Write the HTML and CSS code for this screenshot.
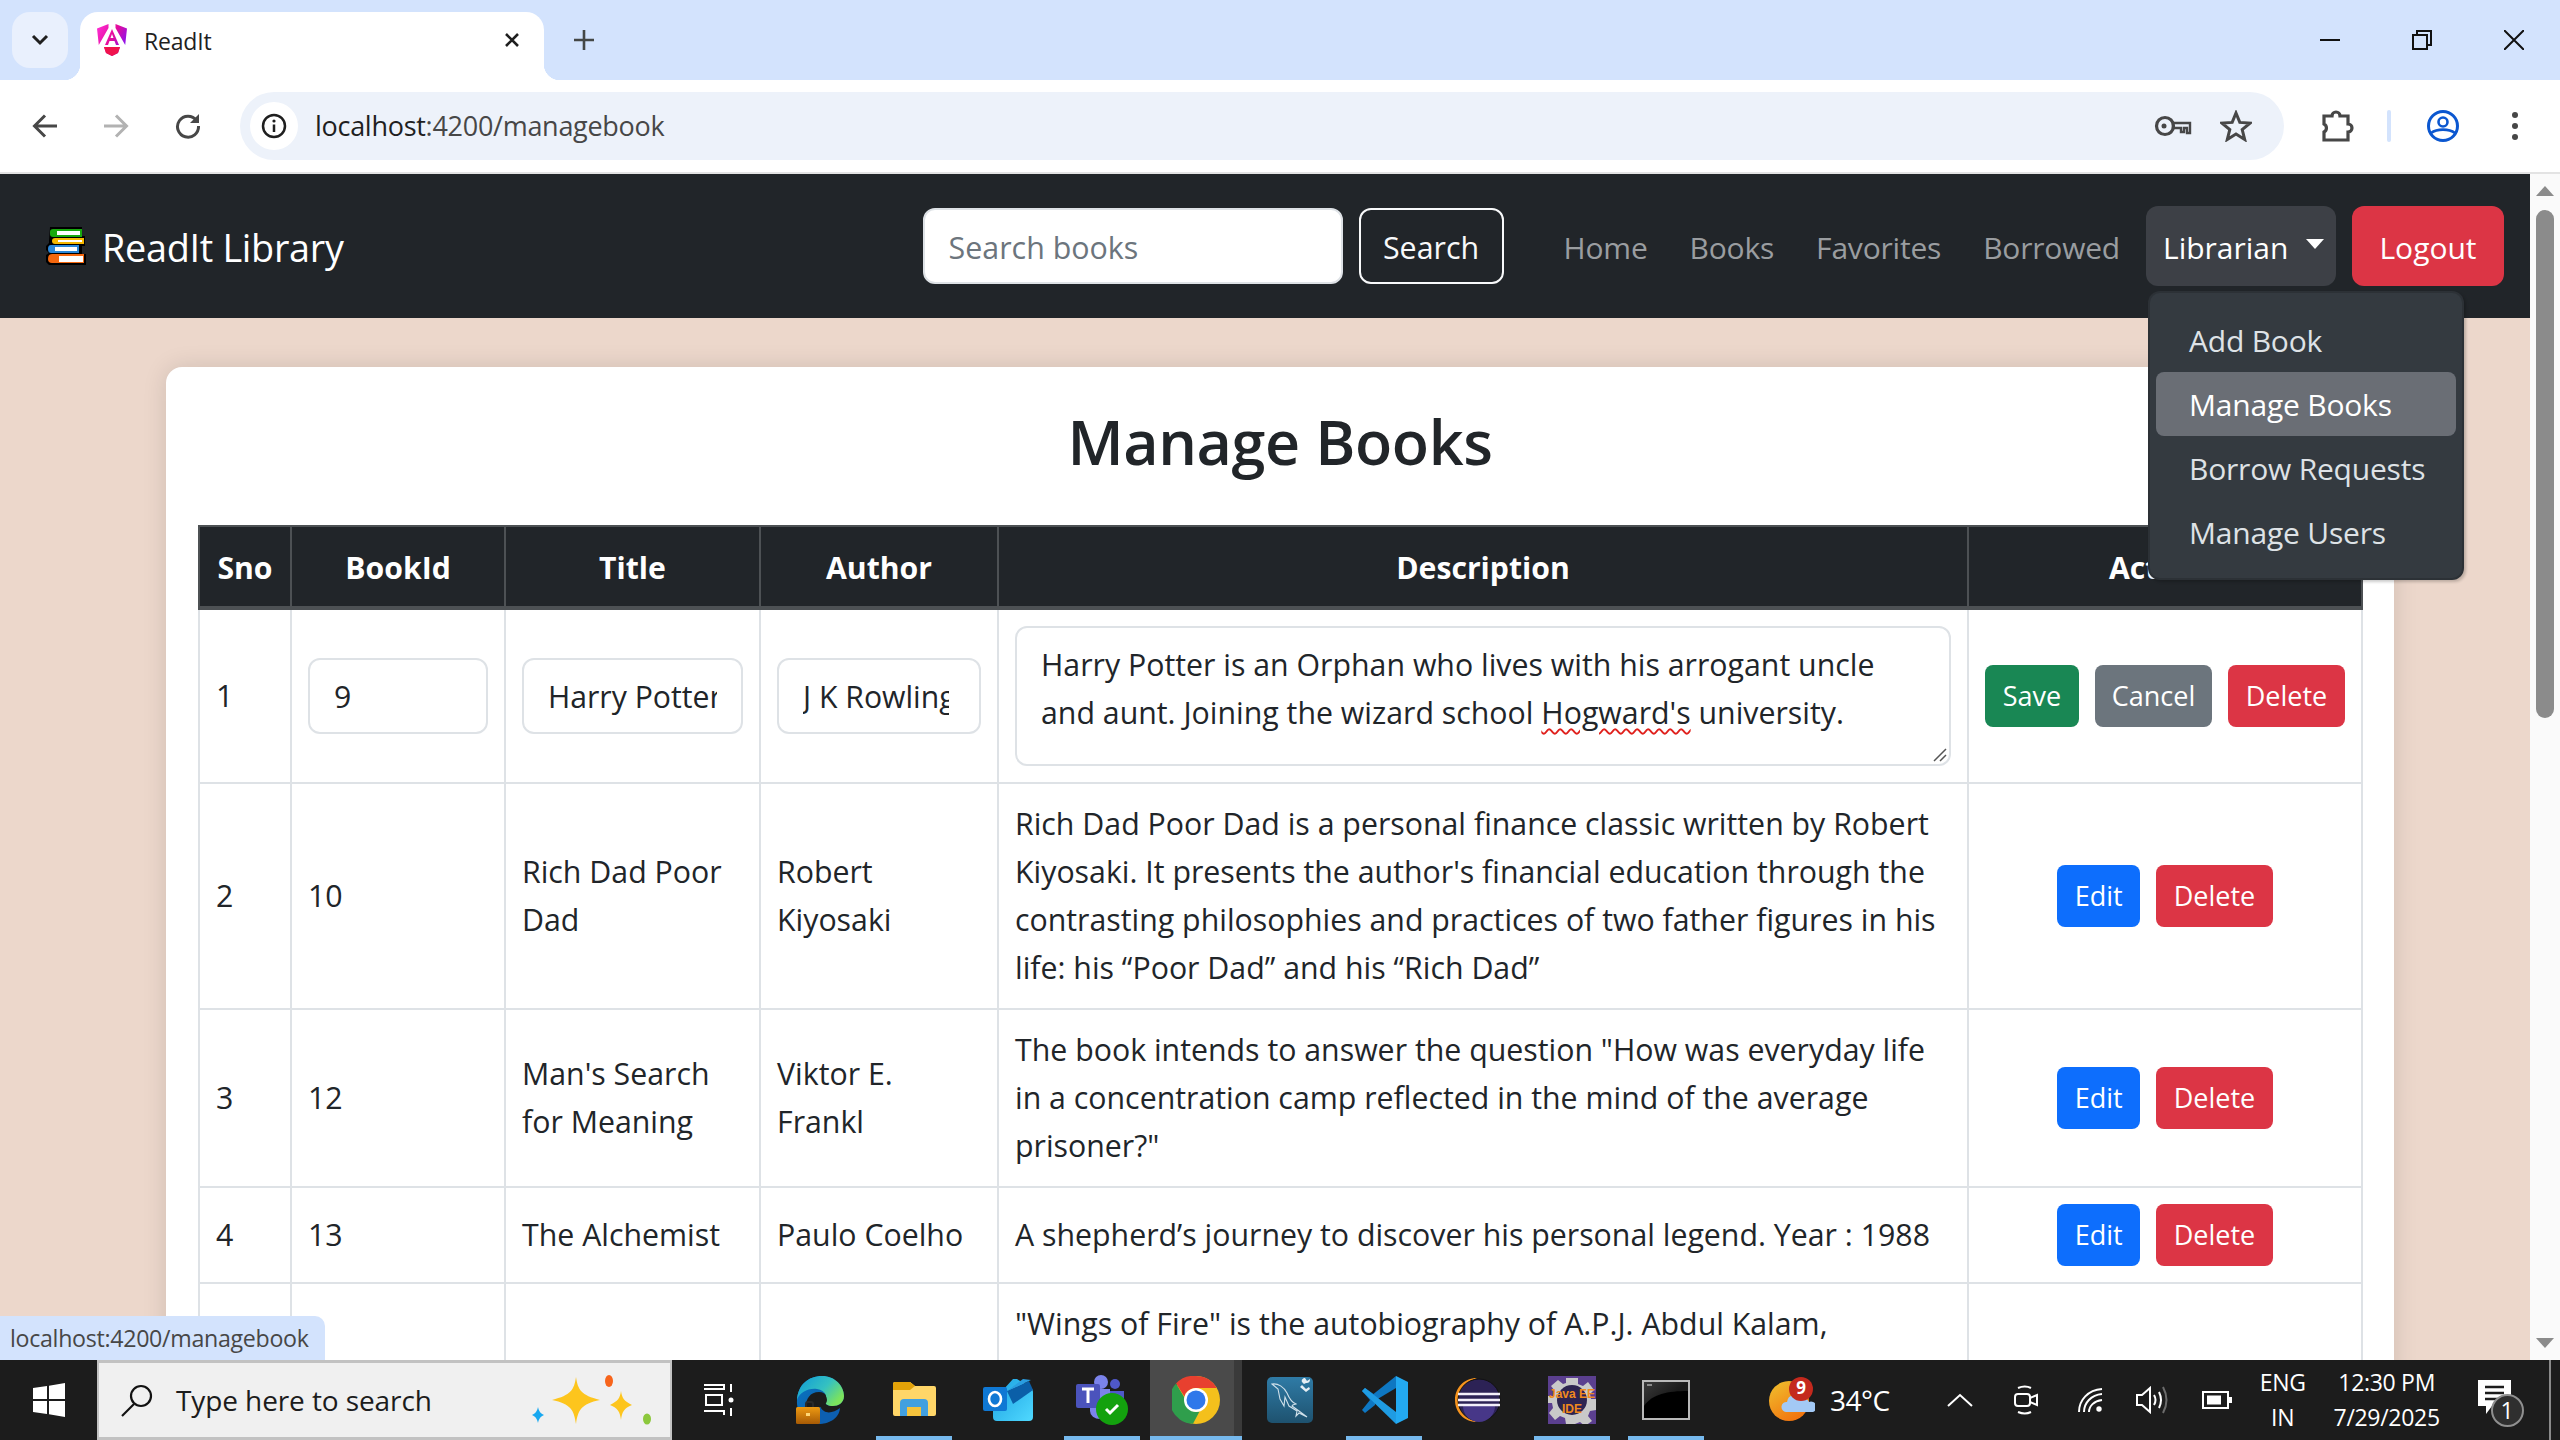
FILE: index.html
```html
<!DOCTYPE html>
<html lang="en">
<head>
<meta charset="utf-8">
<title>ReadIt</title>
<link rel="stylesheet" href="styles.css">
</head>
<body>
<div class="screen">
  <header class="tabstrip">
    <div class="tab-search">
      <svg class="ic" width="20" height="14" viewBox="0 0 20 14"><path d="M3 3l7 7 7-7" fill="none" stroke="#1f1f1f" stroke-width="3"/></svg>
    </div>
    <div class="tab">
      <svg class="favicon" width="30" height="32" viewBox="0 0 30 32">
        <defs><linearGradient id="ang" x1="0" y1="0" x2="1" y2="0.6"><stop offset="0" stop-color="#ff31d9"/><stop offset="0.55" stop-color="#e40c9a"/><stop offset="1" stop-color="#8514f5"/></linearGradient></defs>
        <path d="M11.5 0L0 4.5 1.8 21 11.5 4zM18.5 0L30 4.5 28.2 21 18.5 4zM15 5L8 21h3l1.5-4h5l1.5 4h3zM13.5 14L15 10l1.500 4zM7 23h16l-2 6-6 3-6-3z" fill="url(#ang)"/>
        <path d="M7 23h16l-2 6-6 3-6-3z" fill="#f0134d"/>
      </svg>
      <span class="tab-title">ReadIt</span>
      <svg class="tab-close" width="16" height="16" viewBox="0 0 16 16"><path d="M2 2l12 12M14 2L2 14" stroke="#1f1f1f" stroke-width="2.600"/></svg>
    </div>
    <svg class="new-tab" width="22" height="22" viewBox="0 0 22 22"><path d="M11 1v20M1 11h20" stroke="#444746" stroke-width="2.600"/></svg>
    <div class="window-controls">
      <svg width="20" height="20" viewBox="0 0 20 20"><path d="M0 10h20" stroke="#111" stroke-width="2"/></svg>
      <svg width="20" height="20" viewBox="0 0 20 20"><path d="M1 5h14v14H1zM5 5V1h14v14h-4" fill="none" stroke="#111" stroke-width="2"/></svg>
      <svg width="20" height="20" viewBox="0 0 20 20"><path d="M0 0l20 20M20 0L0 20" stroke="#111" stroke-width="2"/></svg>
    </div>
  </header>

  <div class="toolbar">
    <svg class="tb-back" width="26" height="24" viewBox="0 0 26 24"><path d="M25 12H3M13 1.500L2.500 12 13 22.500" fill="none" stroke="#474747" stroke-width="3"/></svg>
    <svg class="tb-forward" width="26" height="24" viewBox="0 0 26 24"><path d="M1 12h22M13 1.500L23.500 12 13 22.500" fill="none" stroke="#b2b2b2" stroke-width="3"/></svg>
    <svg class="tb-reload" width="26" height="26" viewBox="0 0 26 26"><path d="M21.500 7.500A10.500 10.500 0 1 0 23.500 13" fill="none" stroke="#474747" stroke-width="3"/><path d="M24 1v9h-9" fill="#474747"/></svg>
    <div class="omnibox">
      <span class="site-info"><svg width="26" height="26" viewBox="0 0 26 26"><circle cx="13" cy="13" r="11" fill="none" stroke="#1f1f1f" stroke-width="2.500"/><path d="M13 11.500V19" stroke="#1f1f1f" stroke-width="2.500"/><circle cx="13" cy="8" r="1.600" fill="#1f1f1f"/></svg></span>
      <span class="url"><span class="url-host">localhost</span>:4200/managebook</span>
      <svg class="omni-key" width="38" height="24" viewBox="0 0 38 24"><circle cx="11" cy="12" r="8.500" fill="none" stroke="#474747" stroke-width="3.200"/><circle cx="10" cy="12" r="2.500" fill="#474747"/><path d="M19 9h17v10h-3v-5h-3v4h-3v-4h-8z" fill="none" stroke="#474747" stroke-width="2.400"/></svg>
      <svg class="omni-star" width="32" height="32" viewBox="0 0 32 32"><path d="M16 3l3.800 9.400 10.200.7-7.800 6.500 2.500 9.900L16 24.100 7.300 29.500l2.500-9.900L2 13.100l10.200-.7z" fill="none" stroke="#474747" stroke-width="3"/></svg>
    </div>
    <svg class="tb-ext" width="34" height="34" viewBox="0 0 34 34"><path d="M4 7h8a4 4 0 0 1 8 0h8v8a4 4 0 0 1 0 8v8H4v-8a4.500 4.500 0 0 0 0-8z" fill="none" stroke="#474747" stroke-width="3.200"/></svg>
    <span class="tb-sep"></span>
    <svg class="tb-profile" width="32" height="32" viewBox="0 0 32 32"><circle cx="16" cy="16" r="14.500" fill="none" stroke="#0b57d0" stroke-width="3"/><circle cx="16" cy="12" r="4.500" fill="none" stroke="#0b57d0" stroke-width="2.600"/><path d="M4 23c6-4.500 18-4.500 24 0" fill="none" stroke="#0b57d0" stroke-width="2.600"/></svg>
    <svg class="tb-menu" width="8" height="30" viewBox="0 0 8 30"><circle cx="4" cy="4" r="3" fill="#474747"/><circle cx="4" cy="15" r="3" fill="#474747"/><circle cx="4" cy="26" r="3" fill="#474747"/></svg>
  </div>

  <div class="viewport">
    <div class="page">
      <nav class="navbar">
        <a class="brand">
          <svg width="42" height="40" viewBox="0 0 42 40">
            <path d="M5 1h32v9h3v10h-3v8h4v11H4l-3-3v-7l3-2-3-3v-4l3-3-0-2z" fill="#000"/>
            <path d="M5 6q0-3 3-3h29v8H8q-3 0-3-3z" fill="#18a80e"/><path d="M12 5h23v4H12z" fill="#fff"/>
            <path d="M7 15q0-3 3-3h29v6H10q-3 0-3-3z" fill="#f6b700"/><path d="M13 14h24v2H13z" fill="#fff"/>
            <path d="M3 23q0-4 3-4h28v8H6q-3 0-3-4z" fill="#2b87d8"/><path d="M10 21h22v4H10z" fill="#fff"/>
            <path d="M3 33q0-5 4-5h32v9H7q-4 0-4-4z" fill="#f4670e"/><path d="M14 30h24v6H14z" fill="#fff"/>
          </svg>
          <span class="brand-name">ReadIt Library</span>
        </a>
        <form class="search">
          <input class="search-input" type="text" placeholder="Search books">
          <button class="search-btn" type="button">Search</button>
        </form>
        <div class="nav-links">
          <a class="nav-link">Home</a>
          <a class="nav-link">Books</a>
          <a class="nav-link">Favorites</a>
          <a class="nav-link">Borrowed</a>
        </div>
        <div class="dropdown">
          <button class="dropdown-toggle" type="button">Librarian<span class="caret"></span></button>
          <ul class="dropdown-menu">
            <li class="dropdown-item">Add Book</li>
            <li class="dropdown-item active">Manage Books</li>
            <li class="dropdown-item">Borrow Requests</li>
            <li class="dropdown-item">Manage Users</li>
          </ul>
        </div>
        <button class="logout" type="button">Logout</button>
      </nav>

      <main class="content">
        <section class="card">
          <h2 class="card-title">Manage Books</h2>
          <table class="books">
            <colgroup><col class="c-sno"><col class="c-id"><col class="c-title"><col class="c-author"><col class="c-desc"><col class="c-act"></colgroup>
            <thead>
              <tr><th>Sno</th><th>BookId</th><th>Title</th><th>Author</th><th>Description</th><th>Actions</th></tr>
            </thead>
            <tbody>
              <tr>
                <td>1</td>
                <td><input class="field" type="text" value="9"></td>
                <td><input class="field" type="text" value="Harry Potter"></td>
                <td><input class="field field-clip" type="text" value="J K Rowling"></td>
                <td>
                  <div class="field-area">Harry Potter is an Orphan who lives with his arrogant uncle and aunt. Joining the wizard school <span class="misspelt">Hogward's</span> university.
                    <svg class="grip" width="14" height="14" viewBox="0 0 14 14"><path d="M13 1L1 13M13 7l-6 6" stroke="#555" stroke-width="1.500"/></svg>
                  </div>
                </td>
                <td class="actions"><button class="btn save" type="button">Save</button><button class="btn cancel" type="button">Cancel</button><button class="btn del" type="button">Delete</button></td>
              </tr>
              <tr>
                <td>2</td><td>10</td><td>Rich Dad Poor Dad</td><td>Robert Kiyosaki</td>
                <td>Rich Dad Poor Dad is a personal finance classic written by Robert Kiyosaki. It presents the author's financial education through the contrasting philosophies and practices of two father figures in his life: his “Poor Dad” and his “Rich Dad”</td>
                <td class="actions"><button class="btn edit" type="button">Edit</button><button class="btn del" type="button">Delete</button></td>
              </tr>
              <tr>
                <td>3</td><td>12</td><td>Man's Search for Meaning</td><td>Viktor E. Frankl</td>
                <td>The book intends to answer the question "How was everyday life<br>in a concentration camp reflected in the mind of the average prisoner?"</td>
                <td class="actions"><button class="btn edit" type="button">Edit</button><button class="btn del" type="button">Delete</button></td>
              </tr>
              <tr>
                <td>4</td><td>13</td><td>The Alchemist</td><td>Paulo Coelho</td>
                <td>A shepherd’s journey to discover his personal legend. Year : 1988</td>
                <td class="actions"><button class="btn edit" type="button">Edit</button><button class="btn del" type="button">Delete</button></td>
              </tr>
              <tr class="row-clipped">
                <td></td><td></td><td></td><td></td>
                <td class="cell-top">"Wings of Fire" is the autobiography of A.P.J. Abdul Kalam,</td>
                <td></td>
              </tr>
            </tbody>
          </table>
        </section>
      </main>
    </div>
    <aside class="scrollbar">
      <span class="sb-up"></span>
      <span class="sb-thumb"></span>
      <span class="sb-down"></span>
    </aside>
    <div class="status">localhost:4200/managebook</div>
  </div>

  <footer class="taskbar">
    <div class="start">
      <svg width="32" height="34" viewBox="0 0 32 34"><path d="M0 5l14-2v13H0zM16 2.700L32 0v16H16zM0 18h14v13L0 29zM16 18h16v16l-16-2.700z" fill="#fff"/></svg>
    </div>
    <div class="searchbox">
      <svg class="mag" width="34" height="34" viewBox="0 0 34 34"><circle cx="21" cy="13" r="10" fill="none" stroke="#111" stroke-width="2.200"/><path d="M14 21L2 33" stroke="#111" stroke-width="2.200"/></svg>
      <span class="searchbox-text">Type here to search</span>
      <svg class="sparkles" width="122" height="50" viewBox="0 0 122 50">
        <path d="M47 2c2 13 5 18 24 23-19 4-22 10-24 24-2-14-5-20-24-24 19-5 22-10 24-23z" fill="#fdc51d"/>
        <path d="M92 16c1 7 3 10 11 14-8 3-10 7-11 15-1-8-3-12-11-15 8-4 10-7 11-14z" fill="#fdc51d"/>
        <path d="M9 32c1 4 2 6 6 8-4 2-5 4-6 8-1-4-2-6-6-8 4-2 5-4 6-8z" fill="#18a8f0"/>
        <ellipse cx="80" cy="6" rx="4" ry="6" fill="#f7641b"/>
        <ellipse cx="118" cy="44" rx="4" ry="5.500" fill="#8cc83c"/>
      </svg>
    </div>
    <div class="slot slot-view">
      <svg width="32" height="32" viewBox="0 0 32 32" fill="none" stroke="#fff" stroke-width="2"><path d="M0 1h20v4H0M2 11h16v10H2zM0 27h20v4M0 31M27 0v8M27 24v8"/><circle cx="27" cy="16" r="2.500" fill="#fff" stroke="none"/></svg>
    </div>
    <div class="slot">
      <svg width="48" height="48" viewBox="0 0 48 48">
        <defs>
          <linearGradient id="edge1" x1="0" y1="0" x2="1" y2="0.6"><stop offset="0" stop-color="#0e9ad8"/><stop offset="0.6" stop-color="#35c1c1"/><stop offset="1" stop-color="#7ce35c"/></linearGradient>
          <linearGradient id="edge2" x1="0" y1="0" x2="1" y2="1"><stop offset="0" stop-color="#0a78c8"/><stop offset="1" stop-color="#0c4f96"/></linearGradient>
          <linearGradient id="brief" x1="0" y1="0" x2="0" y2="1"><stop offset="0" stop-color="#ee9a12"/><stop offset="1" stop-color="#a65a05"/></linearGradient>
        </defs>
        <path d="M24 48C10 48 0 38 1 24 2 9 12 0 26 0c13 0 22 10 22 20 0 7-6 10-11 10-6 0-8-2-8-5 4-2 2-9-6-9-9 0-13 7-13 14 0 9 7 18 18 18z" fill="url(#edge2)"/>
        <path d="M1 24C2 9 12 0 26 0c13 0 22 10 22 20 0 7-6 10-11 10-5 0-8-2-8-5 3-3 1-11-8-12C12 12 4 16 1 24z" fill="url(#edge1)"/>
        <path d="M23 48c8 0 20-4 21-16-5 4-12 6-16 3-3-2-4-4-2-4-5 0-10 4-8 10 1 4 3 6 5 7z" fill="#0d5fb0"/>
        <circle cx="25" cy="24" r="6" fill="#1c1c1c"/>
        <path d="M10 31v-3q0-2 2-2h3q2 0 2 2v3" fill="none" stroke="#2a2a2a" stroke-width="2"/>
        <rect x="0" y="31" width="24" height="17" rx="1.500" fill="url(#brief)"/>
        <rect x="10" y="37" width="4" height="3" fill="#ffd776"/>
      </svg>
    </div>
    <div class="slot running">
      <svg width="44" height="36" viewBox="0 0 44 36">
        <path d="M1 2q0-2 2-2h15l5 4h19q2 0 2 2v26q0 2-2 2H3q-2 0-2-2z" fill="#ffd668"/>
        <path d="M1 2q0-2 2-2h15l5 4-5 4H1z" fill="#e3a208"/>
        <path d="M8 34V21q0-4 4-4h20q4 0 4 4v13h-7v-9H15v9z" fill="#42a0e0"/>
        <path d="M15 25h14v9H15z" fill="#f5c33c"/>
      </svg>
    </div>
    <div class="slot">
      <svg width="50" height="42" viewBox="0 0 50 42">
        <defs><linearGradient id="ol" x1="0" y1="0" x2="1" y2="1"><stop offset="0" stop-color="#1a9fe0"/><stop offset="1" stop-color="#50d9ff"/></linearGradient></defs>
        <path d="M10 22L30 0q2-1 4 0l14 9q2 1 2 4v25q0 4-4 4H14q-4 0-4-4z" fill="url(#ol)"/>
        <path d="M24 12l22-10 4 9-20 14z" fill="#0b5fa8"/><path d="M24 12l24-11-8-1z" fill="#2a9de0"/>
        <rect x="0" y="8" width="24" height="24" rx="2" fill="#0f78d4"/>
        <ellipse cx="12" cy="20" rx="6" ry="7" fill="none" stroke="#fff" stroke-width="2.600"/>
      </svg>
    </div>
    <div class="slot running">
      <svg width="52" height="50" viewBox="0 0 52 50">
        <circle cx="25" cy="7" r="7" fill="#7b83eb"/><circle cx="39" cy="9" r="5" fill="#4f58ca"/>
        <path d="M20 16h28v22H20z" fill="#4f58ca"/><path d="M14 14h20v22a10 8 0 0 1-20 0z" fill="#7b83eb"/>
        <rect x="0" y="9" width="24" height="24" rx="2" fill="#4b53bc"/>
        <path d="M6 14h12M12 14v14" stroke="#fff" stroke-width="3"/>
        <circle cx="36" cy="34" r="16" fill="#13a10e"/>
        <path d="M30 34l4 4 8-8" fill="none" stroke="#fff" stroke-width="3"/>
      </svg>
    </div>
    <div class="slot active running">
      <svg width="48" height="48" viewBox="0 0 48 48">
        <circle cx="24" cy="24" r="24" fill="#f4c01c"/>
        <path d="M24 0a24 24 0 0 1 20.800 12H24a12 12 0 0 0-11.500 8.500L4 7.500A24 24 0 0 1 24 0z" fill="#e8402f"/>
        <path d="M4 7.500l9 15a12 12 0 0 0 14.500 13L21 47.800A24 24 0 0 1 4 7.500z" fill="#2f9e4c"/>
        <circle cx="24" cy="24" r="12" fill="#fff"/><circle cx="24" cy="24" r="9.500" fill="#2f78ea"/>
      </svg>
      <span class="active-edge"></span>
    </div>
    <div class="slot">
      <svg width="46" height="46" viewBox="0 0 46 46">
        <defs><linearGradient id="my" x1="0" y1="0" x2="0" y2="1"><stop offset="0" stop-color="#2f7ba6"/><stop offset="1" stop-color="#1e526f"/></linearGradient></defs>
        <rect width="46" height="46" rx="5" fill="url(#my)"/>
        <path d="M5 7c6-1 12 3 15 9 2 5 4 9 9 11-2 1-3 0-4 2l7 5 8 6-8-4-3 3 1-5-8-5-4-9-1 9-4-7-2-10z" fill="none" stroke="#cfe0ea" stroke-width="1.100"/>
        <path d="M34 4l3 3 2-1c3 0 4-1 4-4l-3 2-2-3c-2 0-4 2-3 4zM35 8l4 4 3-2 1 2-4 3-6-5z" fill="#e6eef3"/>
      </svg>
    </div>
    <div class="slot running">
      <svg width="48" height="48" viewBox="0 0 48 48">
        <path d="M2 15l3-3 10 7 0 10-10 8-3-3 8-10z" fill="#0e77c2"/>
        <path d="M36 0v12L16 24l-5-4z" fill="#0e77c2"/><path d="M5 12l31 24v12L2 15z" fill="#1f9ce3"/>
        <path d="M36 0l12 6v36l-12 6z" fill="#23aaf2"/>
      </svg>
    </div>
    <div class="slot">
      <svg width="48" height="44" viewBox="0 0 48 44">
        <path d="M23 0C10 0 1 10 1 22s9 22 22 22C12 40 6 32 6 22S12 4 23 0z" fill="#f7941e"/>
        <circle cx="25" cy="22" r="21" fill="#2c2255" stroke="#111" stroke-width="1"/>
        <path d="M9 28a16 16 0 0 0 32 0z" fill="#473788"/>
        <path d="M4 16h42M4 22h42M4 27h42" stroke="#f3eff9" stroke-width="2.600"/>
      </svg>
    </div>
    <div class="slot running">
      <svg width="48" height="48" viewBox="0 0 48 48">
        <rect width="48" height="48" fill="#5b3f8f"/>
        <path d="M18 2h12v6l5 2 5-4 6 8-4 4 1 5h5v11l-6 1-2 5 4 5-7 5-5-4-5 2H18l-1-6-5-2-5 4-6-7 4-5-1-5H0V20h5l2-5-4-5 7-6 5 4 3-1z" fill="#c9c9c9"/>
        <circle cx="24" cy="24" r="15" fill="#2d2450"/>
        <text class="eclipse-text" x="24" y="22" text-anchor="middle">Java EE</text>
        <text class="eclipse-text" x="24" y="37" text-anchor="middle">IDE</text>
      </svg>
    </div>
    <div class="slot running">
      <svg width="48" height="40" viewBox="0 0 48 40">
        <defs><linearGradient id="term" x1="0" y1="0" x2="1" y2="1"><stop offset="0" stop-color="#3c3c3c"/><stop offset="0.5" stop-color="#1a1a1a"/></linearGradient></defs>
        <rect x="1" y="1" width="46" height="38" fill="url(#term)" stroke="#b9b9b9" stroke-width="2"/>
        <path d="M2 38V26C10 14 26 11 46 11v27z" fill="#000"/>
        <path d="M5 5h5" stroke="#aaa" stroke-width="1.500"/>
      </svg>
    </div>
    <div class="tray">
      <svg class="weather" width="46" height="44" viewBox="0 0 46 44">
        <defs><linearGradient id="sun" x1="0" y1="0" x2="0.6" y2="1"><stop offset="0" stop-color="#f0c22e"/><stop offset="1" stop-color="#f2750f"/></linearGradient></defs>
        <circle cx="20" cy="24" r="20" fill="url(#sun)"/>
        <path d="M17 35a5 5 0 0 1 1-10 8 8 0 0 1 15-3 6 6 0 0 1 7 3 5 5 0 0 1 4 10z" fill="#a3c9f5"/>
        <circle cx="32" cy="12" r="12" fill="#c4291d"/>
        <text class="weather-badge" x="32" y="17" text-anchor="middle">9</text>
      </svg>
      <span class="temp">34°C</span>
      <svg class="tray-caret" width="26" height="14" viewBox="0 0 26 14"><path d="M1 13L13 2l12 11" fill="none" stroke="#fff" stroke-width="2"/></svg>
      <svg class="tray-meet" width="24" height="30" viewBox="0 0 24 30" fill="none" stroke="#fff" stroke-width="2"><path d="M4 3q7-3 13 0M4 27q7 3 13 0"/><rect x="1" y="9" width="15" height="12" rx="3"/><path d="M16 13l7-3v10l-7-3"/></svg>
      <svg class="tray-wifi" width="26" height="24" viewBox="0 0 26 24" fill="none" stroke="#fff" stroke-width="2"><path d="M1 24C1 12 10 2 24 1M6 24C6 15 13 7 24 6M11 24c0-6 5-11 13-12"/><circle cx="21" cy="21" r="2.700" fill="#fff" stroke="none"/></svg>
      <svg class="tray-vol" width="32" height="28" viewBox="0 0 32 28" fill="none" stroke="#fff" stroke-width="2"><path d="M1 9h5l8-7v24l-8-7H1zM18 9q3 5 0 10M23 6q4 8 0 16"/><path d="M27 1q7 13 0 26" stroke="#6b6b6b"/></svg>
      <svg class="tray-batt" width="30" height="18" viewBox="0 0 30 18"><rect x="1" y="1" width="25" height="16" fill="none" stroke="#fff" stroke-width="2"/><rect x="5" y="4.500" width="14" height="9" fill="#fff"/><rect x="27" y="6" width="3" height="6" fill="#fff"/></svg>
      <div class="tray-stack tray-lang"><span>ENG</span><span>IN</span></div>
      <div class="tray-stack tray-clock"><span>12:30 PM</span><span>7/29/2025</span></div>
      <div class="notify">
        <svg width="33" height="34" viewBox="0 0 33 34"><path d="M0 0h33v26H14l-6 8v-8H0z" fill="#fff"/><path d="M7 7h19M7 13h19M7 19h13" stroke="#1c1c1c" stroke-width="2.400"/></svg>
        <span class="notify-badge">1</span>
      </div>
    </div>
  </footer>
</div>
</body>
</html>
```

FILE: styles.css
```css
* { box-sizing: border-box; }
html, body { margin: 0; padding: 0; }
body {
  width: 2560px;
  height: 1440px;
  overflow: hidden;
  font-family: "Open Sans", "Noto Sans", sans-serif;
  color: #212529;
}
svg { display: block; flex: none; }
button, input { font-family: inherit; }

.screen { width: 2560px; height: 1440px; display: flex; flex-direction: column; }

/* browser tab strip */
.tabstrip { height: 80px; flex: none; background: #d3e3fd; display: flex; padding-top: 12px; padding-left: 12px; }
.tab-search { width: 56px; height: 56px; background: #e9f0fd; border-radius: 18px; display: flex; align-items: center; justify-content: center; }
.tab { position: relative; margin-left: 12px; width: 464px; height: 68px; background: #fff; border-radius: 18px 18px 0 0; display: flex; align-items: flex-start; padding: 12px 24px 0 17px; }
.tab::before, .tab::after { content: ""; position: absolute; bottom: 0; width: 16px; height: 16px; }
.tab::before { left: -16px; background: radial-gradient(circle at 0 0, #d3e3fd 16px, #fff 16.5px); }
.tab::after { right: -16px; background: radial-gradient(circle at 100% 0, #d3e3fd 16px, #fff 16.5px); }
.tab-title { margin: 1px 0 0 17px; font-size: 23px; line-height: 32px; color: #1f1f1f; letter-spacing: -0.2px; }
.tab-close { margin-left: auto; margin-top: 8px; }
.new-tab { margin: 17px 0 0 29px; }
.window-controls { margin-left: auto; display: flex; gap: 72px; padding: 18px 36px 0 0; }

/* browser toolbar */
.toolbar { position: relative; height: 94px; flex: none; background: #fff; border-radius: 18px 18px 0 0; border-bottom: 2px solid #e3e3e3; display: flex; align-items: flex-start; padding: 12px 0 0 32px; z-index: 1; }
.tb-back, .tb-forward, .tb-reload { margin-top: 22px; }
.tb-forward { margin-left: 45px; }
.tb-reload { margin-left: 46px; margin-top: 21px; }
.omnibox { margin-left: 39px; width: 2044px; height: 68px; background: #edf2fa; border-radius: 34px; display: flex; align-items: center; padding-left: 10px; }
.site-info { width: 48px; height: 48px; background: #fff; border-radius: 50%; display: flex; align-items: center; justify-content: center; }
.url { margin-left: 17px; font-size: 27px; color: #474747; letter-spacing: -0.28px; margin-top: -1px; }
.url-host { color: #1f1f1f; }
.omni-key { margin-left: auto; margin-right: 2px; }
.omni-star { margin: 0 32px 0 26px; }
.tb-ext { margin: 17px 0 0 36px; }
.tb-sep { width: 4px; height: 32px; margin: 18px 0 0 33px; background: #d3e3fd; border-radius: 2px; }
.tb-profile { margin: 18px 0 0 36px; }
.tb-menu { margin: 19px 0 0 52px; }

/* viewport */
.viewport { position: relative; flex: 1; min-height: 0; display: flex; overflow: hidden; }
.page { width: 2530px; flex: none; background: #ecd7cb; overflow: hidden; }
.scrollbar { width: 30px; flex: none; background: #fafafa; position: relative; display: flex; flex-direction: column; align-items: center; padding-top: 12px; }
.sb-up { width: 0; height: 0; border-left: 9px solid transparent; border-right: 9px solid transparent; border-bottom: 10px solid #8b8b8b; }
.sb-thumb { width: 18px; height: 508px; margin-top: 14px; background: #8b8b8b; border-radius: 9px; }
.sb-down { width: 0; height: 0; border-left: 9px solid transparent; border-right: 9px solid transparent; border-top: 10px solid #8b8b8b; margin-top: auto; margin-bottom: 12px; }
.status { position: absolute; left: 0; bottom: 0; height: 44px; width: 325px; padding: 0 0 0 10px; background: #d3e3fd; border-radius: 0 10px 0 0; font-size: 23.2px; line-height: 44px; color: #474747; letter-spacing: -0.3px; white-space: nowrap; z-index: 5; }

/* site navbar */
.navbar { height: 144px; background: #212529; display: flex; align-items: center; padding: 0 26px 0 45px; }
.brand { display: flex; align-items: center; gap: 15px; color: #fff; font-size: 37.8px; letter-spacing: -0.3px; white-space: nowrap; }
.brand-name { padding-top: 2px; }
.search { margin-left: auto; display: flex; gap: 16px; }
.search-input { width: 420px; height: 76px; border: 2px solid #dee2e6; border-radius: 12px; padding: 2px 24px 0; font-size: 30.4px; color: #212529; background: #fff; outline: none; }
.search-input::placeholder { color: #6c757d; opacity: 1; }
.search-btn { width: 145px; height: 76px; border: 2px solid #f8f9fa; border-radius: 12px; background: transparent; color: #f8f9fa; font-size: 30.4px; padding: 2px 0 0; }
.nav-links { display: flex; margin-left: 39px; margin-right: 5px; padding-top: 2px; }
.nav-link { padding: 0 21px; font-size: 30px; color: #9a9da0; white-space: nowrap; letter-spacing: -0.2px; }
.dropdown { position: relative; }
.dropdown-toggle { width: 190px; height: 80px; display: flex; align-items: center; padding: 2px 0 0 17px; border: 0; border-radius: 12px; background: #3d4046; color: #fff; font-size: 30px; }
.caret { margin-left: 18px; width: 0; height: 0; border-left: 9px solid transparent; border-right: 9px solid transparent; border-top: 10px solid #fff; margin-top: -6px; }
.dropdown-menu { position: absolute; left: 2px; top: 85px; width: 316px; margin: 0; padding: 15px 6px 14px; list-style: none; background: #343a40; border: 2px solid rgba(0,0,0,.15); border-radius: 12px; box-shadow: 2px 2px 3px rgba(0,0,0,.2); z-index: 10; }
.dropdown-item { height: 64px; padding: 0 0 0 33px; border-radius: 8px; font-size: 30px; line-height: 65px; color: #dee2e6; letter-spacing: -0.2px; white-space: nowrap; }
.dropdown-item.active { background: #6a6e75; color: #fff; }
.logout { width: 152px; height: 80px; margin-left: 16px; border: 0; border-radius: 12px; background: #dc3545; color: #fff; font-size: 30px; padding: 2px 0 0; }

/* content card */
.content { padding: 49px 0 0 166px; }
.card { width: 2228px; background: #fff; border-radius: 16px 16px 0 0; padding: 32px 0 0 32px; box-shadow: 0 0 24px rgba(0,0,0,.12); }
.card-title { margin: 0 32px 49px 0; height: 77px; text-align: center; font-size: 61px; font-weight: 600; line-height: 85px; color: #212529; letter-spacing: -0.4px; }

/* table */
.books { width: 2163px; table-layout: fixed; border-collapse: collapse; font-size: 30.3px; line-height: 48px; color: #212529; }
.c-sno { width: 92px; } .c-id { width: 214px; } .c-title { width: 255px; } .c-author { width: 238px; } .c-desc { width: 970px; } .c-act { width: 394px; }
.books th { background: #212529; color: #fff; font-weight: 700; padding: 17px 16px 14px; text-align: center; border: 2px solid #4d5154; font-size: 30.2px; }
.books td { padding: 16px; vertical-align: middle; border: 2px solid #dee2e6; }
.books thead tr { border-bottom: 4px solid #4d5154; }
.books td.cell-top { vertical-align: top; }
.row-clipped td { height: 226px; }
.field { display: block; width: 100%; height: 76px; border: 2px solid #dee2e6; border-radius: 12px; padding: 0 24px; font-size: 30.2px; color: #212529; background: #fff; outline: none; }
.field-clip { padding-right: 30px; }
.field-area { position: relative; height: 140px; border: 2px solid #dee2e6; border-radius: 12px; padding: 13px 24px 0; }
.misspelt { text-decoration: underline wavy #e0201c 2px; text-underline-offset: 4px; }
.grip { position: absolute; right: 2px; bottom: 2px; }
.actions { text-align: center; white-space: nowrap; }
.btn { height: 62px; padding: 0 17.5px 2px; margin-left: 16px; border: 0; border-radius: 8px; color: #fff; font-size: 27px; vertical-align: middle; }
.btn:first-child { margin-left: 0; }
.save { background: #198754; }
.cancel { background: #6c757d; padding: 0 17px 2px; }
.del { background: #dc3545; }
.edit { background: #0d6efd; }

/* windows taskbar */
.taskbar { height: 80px; flex: none; background: #1c1c1c; display: flex; color: #fff; position: relative; z-index: 6; }
.start { width: 97px; display: flex; align-items: center; justify-content: center; }
.searchbox { width: 575px; background: #f0f0f0; border: solid #c2c2c2; border-width: 3px 2px 3px 2px; display: flex; align-items: center; padding-left: 21px; }
.searchbox-text { margin-left: 22px; font-size: 28px; color: #1c1c1c; letter-spacing: -0.1px; white-space: nowrap; }
.sparkles { margin-left: auto; margin-right: 19px; }
.slot { position: relative; width: 94px; display: flex; align-items: center; justify-content: center; }
.slot-view { padding-right: 12px; margin-left: 7px; }
.slot.running::after { content: ""; position: absolute; left: 9px; right: 9px; bottom: 0; height: 4px; background: #76b9ed; }
.slot.active { background: #4a4a4a; margin: 0 1px; width: 92px; }
.slot.active.running::after { left: 0; right: 0; }
.active-edge { position: absolute; right: 0; top: 0; bottom: 0; width: 8px; background: #3a3a3a; }
.eclipse-text { font-family: "Liberation Sans", sans-serif; font-size: 12px; font-weight: 700; fill: #f08a1d; }
.tray { margin-left: auto; display: flex; align-items: center; width: 791px; position: relative; }
.tray::after { content: ""; position: absolute; right: 9px; top: 0; bottom: 0; width: 2px; background: #8a8a8a; }
.weather { margin-top: -2px; }
.weather-badge { font-family: "Open Sans", sans-serif; font-size: 17px; font-weight: 700; fill: #fff; }
.temp { margin-left: 15px; font-size: 28px; white-space: nowrap; letter-spacing: -0.5px; }
.tray-caret { margin-left: 57px; }
.tray-meet { margin-left: 41px; }
.tray-wifi { margin-left: 40px; }
.tray-vol { margin-left: 32px; }
.tray-batt { margin-left: 34px; }
.tray-stack { display: flex; flex-direction: column; align-items: center; font-size: 23px; line-height: 35px; white-space: nowrap; letter-spacing: -0.3px; }
.tray-lang { width: 60px; margin-left: 21px; }
.tray-clock { width: 130px; margin-left: 9px; }
.notify { position: relative; margin-left: 26px; margin-top: -6px; }
.notify-badge { position: absolute; left: 13px; top: 14px; width: 33px; height: 33px; border-radius: 50%; background: #2f2f2f; border: 2px solid #8f8f8f; font-size: 23px; line-height: 28px; text-align: center; color: #fff; }
```
